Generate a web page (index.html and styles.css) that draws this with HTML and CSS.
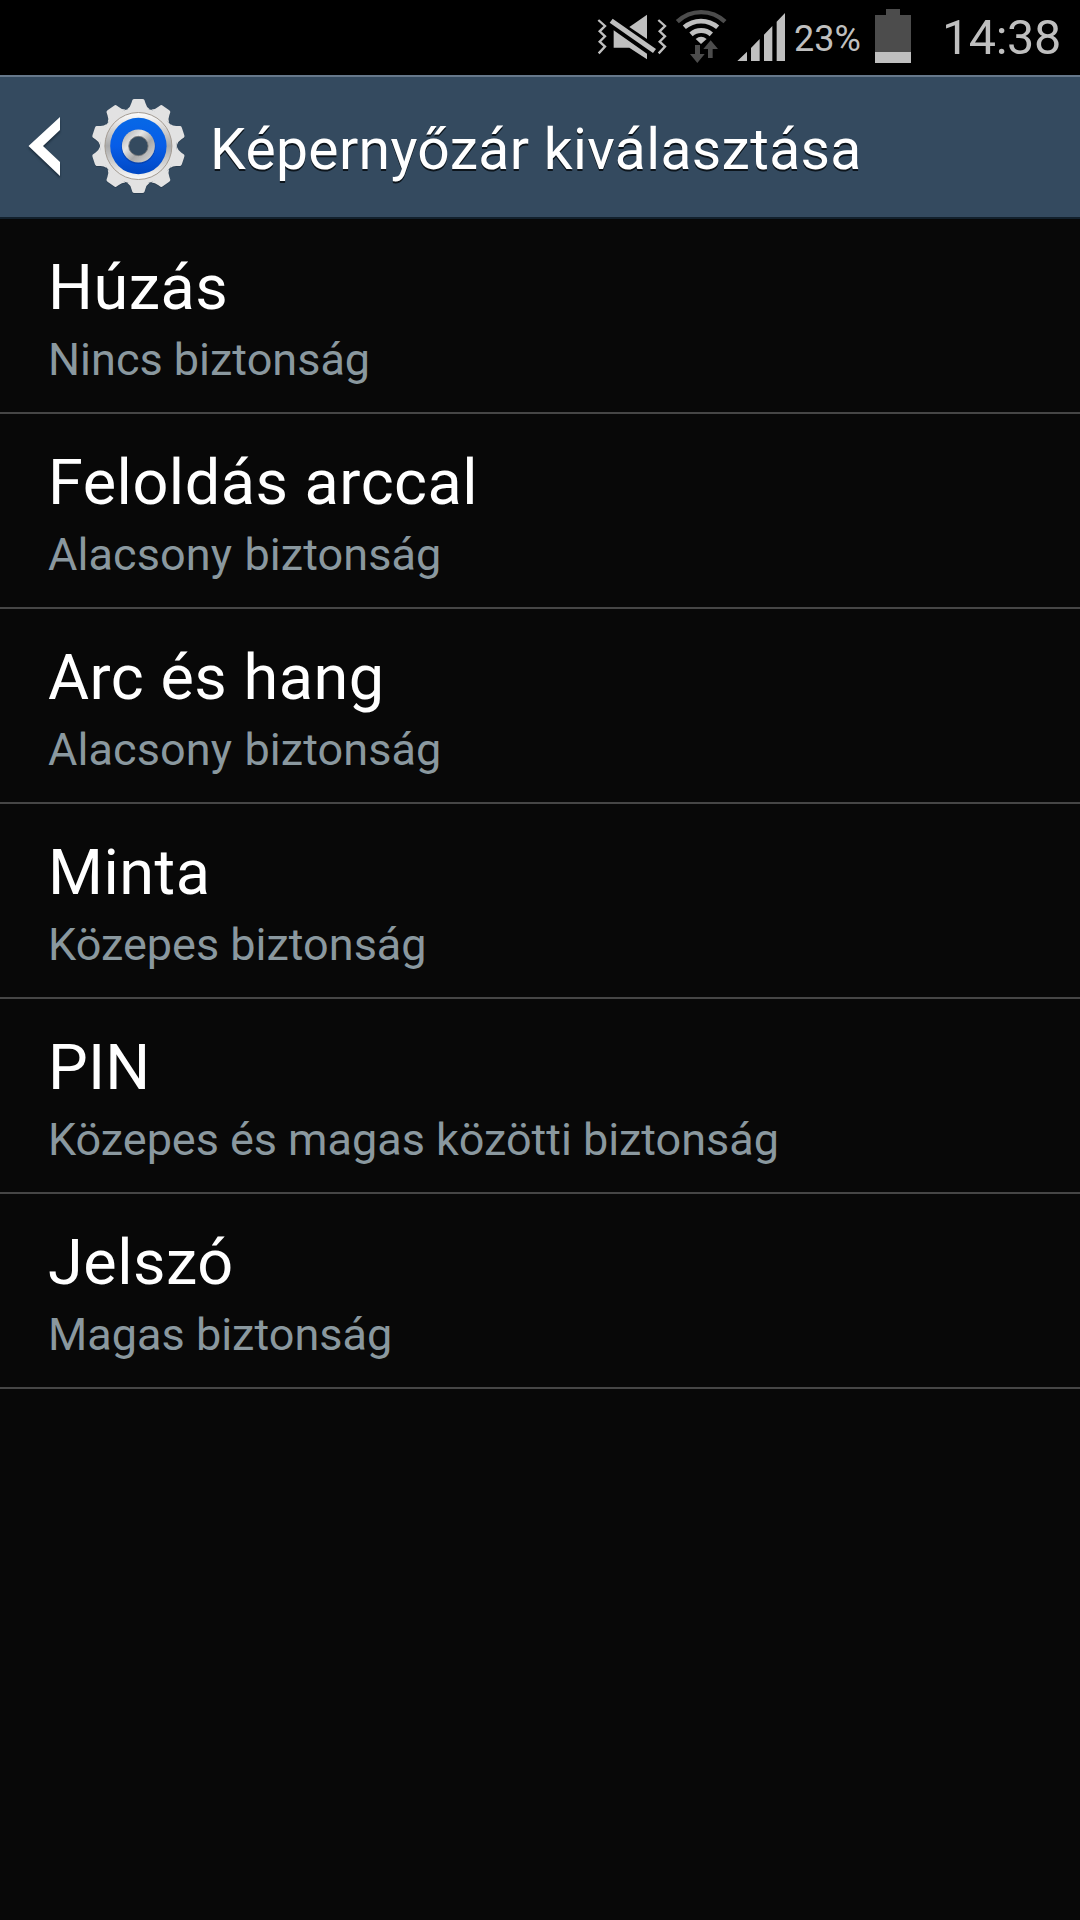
FILE: index.html
```html
<!DOCTYPE html>
<html lang="hu">
<head>
<meta charset="utf-8">
<title>Képernyőzár kiválasztása</title>
<link rel="stylesheet" href="styles.css">
</head>
<body>
<div class="status-bar">
  <svg class="icon-mute" viewBox="48 30 216 150" fill="#bfbfbf">
    <path d="M148 81 L201 44 V117 Z"/>
    <path d="M101 91 L201 161 V178 L148 143 H101 Z"/>
    <path d="M98 56 L228 147 L219 159 L89 68 Z"/>
    <path d="M55 60 L75 78 L59 94 L75 109 L59 125 L75 140 L56 160" fill="none" stroke="#bfbfbf" stroke-width="7"/>
    <path d="M235 60 L255 78 L239 94 L255 109 L239 125 L255 140 L236 160" fill="none" stroke="#bfbfbf" stroke-width="7"/>
  </svg>
  <svg class="icon-wifi" viewBox="285 27 156 165" fill="none">
    <path d="M292 65 A103 103 0 0 1 435 65" stroke="#4c4c4c" stroke-width="13"/>
    <path d="M313 82 A76 76 0 0 1 413 82" stroke="#bfbfbf" stroke-width="14"/>
    <path d="M333 103 A46 46 0 0 1 394 103" stroke="#bfbfbf" stroke-width="15"/>
    <path d="M347 117 Q363 104 380 117 L363 132 Z" fill="#bfbfbf"/>
    <path d="M345 135 H360 V162 H374 L352 189 L330 162 H345 Z M384 174 H398 V147 H414 L392 121 L370 147 H384 Z" fill="#4c4c4c"/>
  </svg>
  <svg class="icon-signal" viewBox="468 36 150 150" fill="#bfbfbf">
    <path d="M472 183 L501 155 V183 Z M513 183 V144 L539 117 V183 Z M552 183 V104 L577 78 V183 Z M590 183 V65 L615 39 V183 Z"/>
  </svg>
  <span class="percent">23%</span>
  <svg class="icon-battery" viewBox="0 0 36 54">
    <path d="M11 0 H25 V6 H36 V43 H0 V6 H11 Z" fill="#4c4c4c"/>
    <path d="M0 43 H36 V54 H0 Z" fill="#bfbfbf"/>
  </svg>
  <span class="clock">14:38</span>
</div>
<header class="action-bar">
  <svg class="icon-back" viewBox="0 0 34 62">
    <path d="M0.5 31 L32 2 V15 L15 31 L32 47 V61 Z" fill="#fff"/>
  </svg>
  <svg class="icon-gear" viewBox="-50 -50 100 100">
    <defs>
      <linearGradient id="rim" x1="0" y1="0" x2="0" y2="1">
        <stop offset="0" stop-color="#fff"/><stop offset=".5" stop-color="#a9a9a9"/><stop offset="1" stop-color="#fafafa"/>
      </linearGradient>
      <linearGradient id="blue" x1="0" y1="0" x2="0" y2="1">
        <stop offset="0" stop-color="#0768e6"/><stop offset=".5" stop-color="#075de8"/><stop offset="1" stop-color="#0048c4"/>
      </linearGradient>
      <linearGradient id="hub" x1="0" y1="0" x2="1" y2="1">
        <stop offset="0" stop-color="#a5a5a5"/><stop offset=".35" stop-color="#e6e6e6"/><stop offset=".6" stop-color="#a8a8a8"/><stop offset="1" stop-color="#dedede"/>
      </linearGradient>
      <path id="tooth" d="M-11 -37 Q-8 -39 -7 -43 L-6 -46 Q-5.5 -47 -4 -47 H4 Q5.500 -47 6 -46 L7 -43 Q8 -39 11 -37 Z"/>
      <g id="cog">
        <circle r="38.500"/>
        <use href="#tooth"/>
        <use href="#tooth" transform="rotate(36)"/>
        <use href="#tooth" transform="rotate(72)"/>
        <use href="#tooth" transform="rotate(108)"/>
        <use href="#tooth" transform="rotate(144)"/>
        <use href="#tooth" transform="rotate(180)"/>
        <use href="#tooth" transform="rotate(216)"/>
        <use href="#tooth" transform="rotate(252)"/>
        <use href="#tooth" transform="rotate(288)"/>
        <use href="#tooth" transform="rotate(324)"/>
      </g>
    </defs>
    <g transform="translate(.4 0)">
      <use href="#cog" fill="#1b2c3c" opacity=".4" y="1"/>
      <use href="#cog" fill="#e2e2e2"/>
      <circle r="33.500" fill="url(#rim)" stroke="#a39b92" stroke-width="1"/>
      <circle r="28.200" fill="url(#blue)"/>
      <circle r="17" cy="1" fill="#063a9c" opacity=".6"/>
      <circle r="16.500" fill="url(#hub)"/>
      <circle r="9.700" fill="#344a5f" stroke="#777" stroke-width=".8"/>
    </g>
  </svg>
  <h1 class="title">Képernyőzár kiválasztása</h1>
</header>
<main class="list">
  <div class="row"><div class="name">Húzás</div><div class="level">Nincs biztonság</div></div>
  <div class="row"><div class="name">Feloldás arccal</div><div class="level low">Alacsony biztonság</div></div>
  <div class="row"><div class="name">Arc és hang</div><div class="level low">Alacsony biztonság</div></div>
  <div class="row"><div class="name">Minta</div><div class="level">Közepes biztonság</div></div>
  <div class="row"><div class="name short">PIN</div><div class="level long">Közepes és magas közötti biztonság</div></div>
  <div class="row"><div class="name">Jelszó</div><div class="level">Magas biztonság</div></div>
</main>
</body>
</html>
```
FILE: styles.css
```css
* { box-sizing: border-box; }

body {
  margin: 0;
  min-height: 1920px;
  background: #080808;
  color: #fff;
  font-family: Roboto, sans-serif;
  font-weight: 400;
}

svg { display: block; flex: none; }

.status-bar {
  display: flex;
  align-items: flex-start;
  height: 75px;
  padding-left: 596px;
  background: #000;
  color: #bfbfbf;
  white-space: nowrap;
}

.icon-mute { width: 72px; height: 50px; margin-top: 10px; }
.icon-wifi { width: 52px; height: 55px; margin: 9px 0 0 7px; }
.icon-signal { width: 50px; height: 50px; margin: 12px 0 0 9px; }

.percent {
  width: 80px;
  margin: 17px 0 0 8px;
  font-size: 36px;
  line-height: 44px;
}

.icon-battery { width: 36px; height: 54px; margin-top: 9px; margin-left: 1px; }

.clock {
  margin: 9px 0 0 31px;
  font-size: 48.5px;
  line-height: 58px;
  letter-spacing: -0.4px;
}

.action-bar {
  display: flex;
  align-items: flex-start;
  height: 144px;
  padding-left: 28px;
  background: #344a5f;
  border-top: 2px solid #66788b;
  border-bottom: 2px solid #12202c;
}

.icon-back { width: 34px; height: 62px; margin-top: 38px; filter: drop-shadow(0 2px 1px #1b2c3c); }
.icon-gear { width: 100px; height: 100px; margin: 19px 0 0 26px; }

.title {
  margin: 39px 0 0 22px;
  font-size: 57px;
  font-weight: 400;
  line-height: 68px;
  letter-spacing: 0.35px;
  white-space: nowrap;
  text-shadow: 0 2px 0 #0d151c;
}

.row {
  height: 195px;
  padding: 32px 0 0 48px;
  border-bottom: 2px solid #464646;
  white-space: nowrap;
}

.name {
  font-size: 63px;
  line-height: 74px;
  letter-spacing: 0.5px;
}

.name.short { letter-spacing: 0.2px; }

.level {
  margin-top: 8px;
  color: #8a989f;
  font-size: 45px;
  line-height: 54px;
}

.level.low { letter-spacing: 0.08px; word-spacing: 1.2px; }
.level.long { letter-spacing: -0.04px; }
```
